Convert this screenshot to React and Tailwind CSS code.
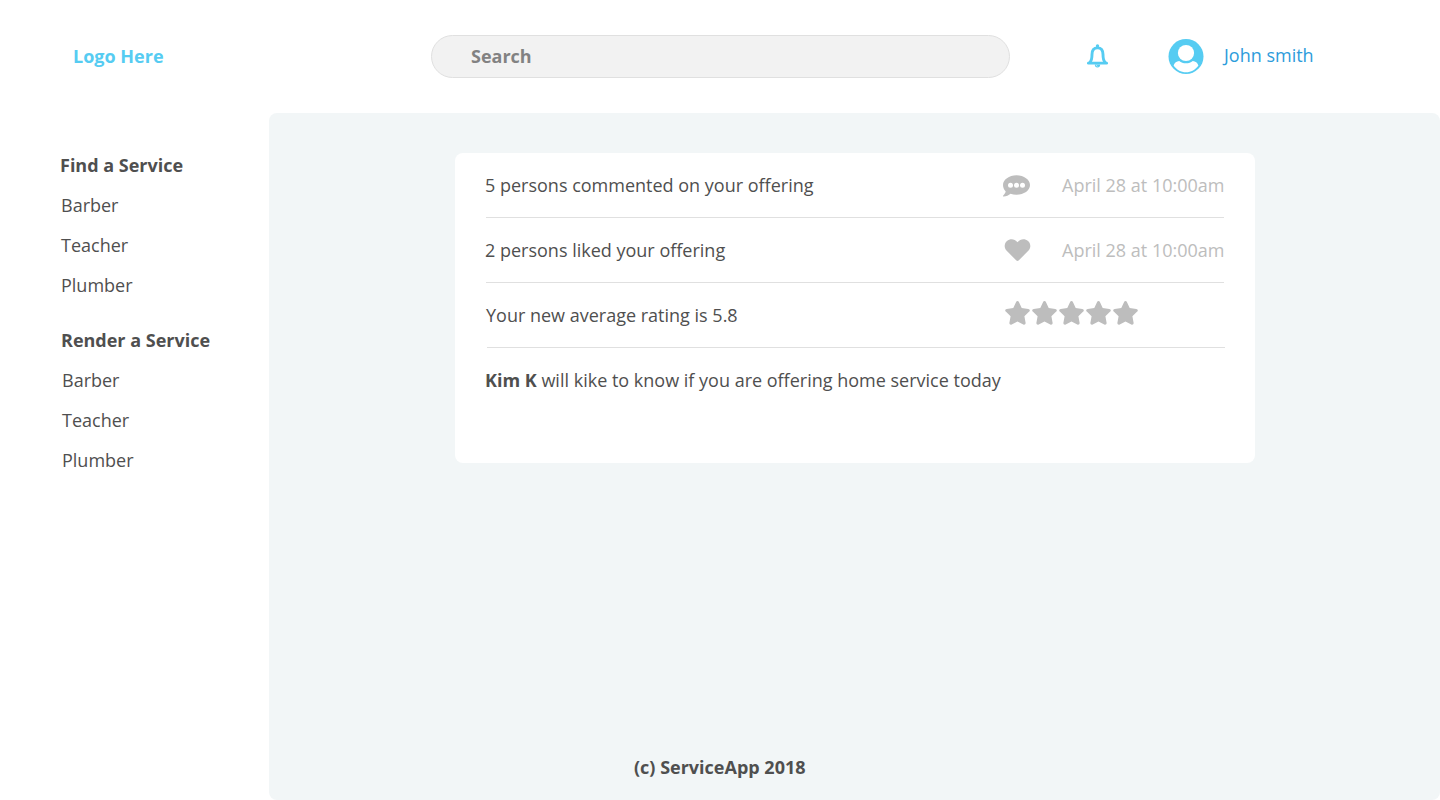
const STAR =
  'M12.500 .5c.7 0 1.100.4 1.400 1.100l2.800 5.900 6.600.9c1.500.2 2 1.700.9 2.700l-4.800 4.600 1.200 6.600c.2 1.500-1.100 2.300-2.300 1.700l-5.800-3.100-5.800 3.100c-1.200.600-2.500-.2-2.300-1.700l1.200-6.600-4.800-4.600c-1.100-1-.600-2.500.9-2.700l6.600-.9 2.800-5.900c.3-.7.7-1.100 1.400-1.100z';

function BellIcon() {
  return (
    <svg width="22" height="25" viewBox="0 0 22 25" fill="none">
      <path
        d="M2.900 18.300C4.900 16.300 5 14 5 10.500C5 6.300 7.200 3.900 10.500 3.900s5.500 2.400 5.500 6.600c0 3.500.1 5.800 2.100 7.800"
        stroke="#56ccf2"
        strokeWidth="2.900"
        strokeLinecap="round"
      />
      <path d="M1.400 19.200h18.200" stroke="#56ccf2" strokeWidth="2.800" strokeLinecap="round" />
      <circle cx="10.500" cy="1.900" r="1.700" fill="#56ccf2" />
      <path d="M7.800 20.500h5.400a2.700 3 0 0 1-5.400 0z" fill="#56ccf2" />
      <path d="M9.100 21c.2.800.6 1.200 1.400 1.300" stroke="#fff" strokeWidth=".6" />
    </svg>
  );
}

function AvatarIcon() {
  return (
    <svg width="36" height="36" viewBox="0 0 36 36">
      <circle cx="18" cy="17.500" r="17.500" fill="#56ccf2" />
      <circle cx="18" cy="14" r="8.100" fill="#fff" />
      <path
        d="M11.200 22c2 1.500 4 2.300 6.800 2.300s4.800-.8 6.800-2.300c2.600.2 4.900 1.800 5.600 4.500C27.500 30.800 23.200 33.300 18 33.300S8.500 30.800 5.600 26.500c.7-2.700 3-4.300 5.600-4.500z"
        fill="#fff"
      />
    </svg>
  );
}

function CommentIcon() {
  return (
    <svg width="27" height="22" viewBox="0 0 27 22">
      <path
        d="M13.500 .3C20.900 .3 27 4.700 27 10.100s-6.100 9.700-13.500 9.700c-2.200 0-4.200-.3-6-1C5.700 20.300 3.300 21.600.6 21.600c-.6 0-.8-.600-.4-1 .9-.9 2.100-2.500 2.500-4.100C1 14.800 0 12.500 0 10.100 0 4.700 6.100 .3 13.500 .3z"
        fill="#bdbdbd"
      />
      <g fill="#fff">
        <circle cx="7.500" cy="10.200" r="2.500" />
        <circle cx="13.500" cy="10.200" r="2.500" />
        <circle cx="19.500" cy="10.200" r="2.500" />
      </g>
    </svg>
  );
}

function HeartIcon() {
  return (
    <svg width="27" height="22" viewBox="-0.5 0 27 22">
      <path
        d="M13 3.200C15.900-.5 20.500-.6 23.500 1.900c3 2.600 3.100 7 .3 9.900l-9.700 9.700c-.7.600-1.500.6-2.200 0L2.200 11.800C-.6 8.900-.5 4.500 2.500 1.900 5.500-.6 10.100-.5 13 3.200z"
        fill="#bdbdbd"
      />
    </svg>
  );
}

function StarRating({ count }) {
  return (
    <div className="flex gap-0.5">
      {Array.from({ length: count }, (_, i) => (
        <svg key={i} width="25" height="26" viewBox="0 -0.5 25 26">
          <path d={STAR} fill="#bdbdbd" />
        </svg>
      ))}
    </div>
  );
}

function NavGroup({ title, className, itemClassName }) {
  return (
    <section className={className}>
      <h2 className="font-bold">{title}</h2>
      <ul className={itemClassName}>
        <li>Barber</li>
        <li>Teacher</li>
        <li>Plumber</li>
      </ul>
    </section>
  );
}

export default function App() {
  return (
    <div className="flex h-[800px] w-[1440px] flex-col overflow-hidden bg-white font-['Open_Sans',sans-serif] text-[18px] text-[#4f4f4f]">
      <header className="flex h-[113px] shrink-0 items-center">
        <div className="w-[431px] pl-[73px] font-bold text-[#56ccf2]">Logo Here</div>
        <div className="flex h-[43px] w-[579px] items-center rounded-full border border-[#e0e0e0] bg-[#f2f2f2] pl-[39px] font-bold text-[#828282]">
          Search
        </div>
        <div className="ml-[77px]">
          <BellIcon />
        </div>
        <div className="ml-[59px] flex items-center gap-5">
          <AvatarIcon />
          <span className="pb-0.5 text-[#2d9cdb]">John smith</span>
        </div>
      </header>
      <div className="flex min-h-0 flex-1">
        <nav className="w-[269px] shrink-0 pt-8 leading-[40px]">
          <NavGroup title="Find a Service" className="pl-[60px]" itemClassName="pl-px" />
          <NavGroup title="Render a Service" className="mt-[15px] pl-[61px]" itemClassName="pl-px" />
        </nav>
        <main className="flex flex-1 flex-col justify-between rounded-lg bg-[#f2f6f7] pt-10">
          <div className="ml-[186px] h-[310px] w-[800px] rounded-lg bg-white px-[30px]">
            <div className="flex h-16 items-center pr-[0.5px]">
              <span className="w-[518px]">5 persons commented on your offering</span>
              <div className="pt-0.5">
                <CommentIcon />
              </div>
              <time className="ml-auto text-[#bdbdbd]">April 28 at 10:00am</time>
            </div>
            <hr className="mr-px ml-px border-[#e0e0e0]" />
            <div className="flex h-16 items-center pr-[0.5px]">
              <span className="w-[519px]">2 persons liked your offering</span>
              <HeartIcon />
              <time className="ml-auto text-[#bdbdbd]">April 28 at 10:00am</time>
            </div>
            <hr className="mr-px ml-px border-[#e0e0e0]" />
            <div className="flex h-16 items-center">
              <span className="w-[520px] pl-px">Your new average rating is 5.8</span>
              <div className="pb-1">
                <StarRating count={5} />
              </div>
            </div>
            <hr className="ml-0.5 border-[#e0e0e0]" />
            <p className="flex h-16 items-center whitespace-pre">
              <b>Kim K</b> will kike to know if you are offering home service today
            </p>
          </div>
          <footer className="ml-[365px] h-[53px] leading-[40px] font-bold">(c) ServiceApp 2018</footer>
        </main>
      </div>
    </div>
  );
}
